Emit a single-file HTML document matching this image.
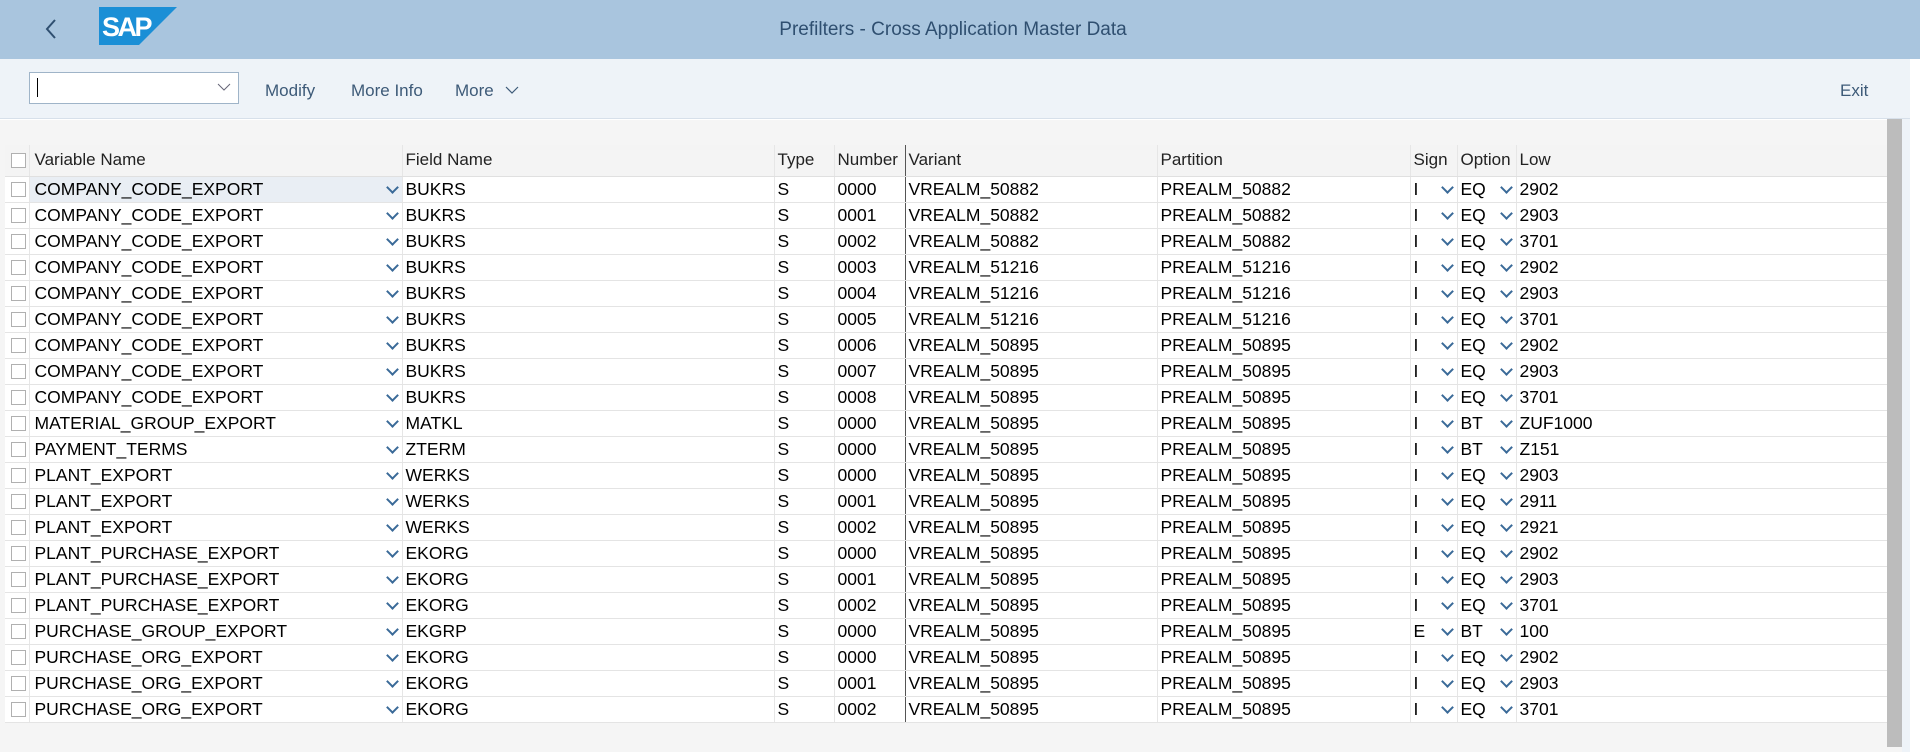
<!DOCTYPE html>
<html><head><meta charset="utf-8"><style>
*{margin:0;padding:0;box-sizing:border-box}
body{width:1920px;height:752px;overflow:hidden;background:#fff;font-family:"Liberation Sans",Arial,sans-serif;position:relative}
#hdr{position:absolute;left:0;top:0;width:1920px;height:59px;background:#a9c5de}
#title{position:absolute;left:0;width:1906px;top:19px;text-align:center;font-size:19px;color:#2f4f70}
#tb{position:absolute;left:0;top:59px;width:1910px;height:60px;background:#eef3f8;border-bottom:1px solid #d7e0ea}
.tbtn{position:absolute;top:22px;font-size:17px;color:#3d5a78}
#main{position:absolute;left:0;top:120px;width:1910px;height:632px;background:#f5f5f5}
#right{position:absolute;left:1902px;top:119px;width:8px;height:633px;background:#eef3f8}
#sb{position:absolute;left:1887px;top:119px;width:15px;height:628px;background:#bcbcbc}
table{position:absolute;left:5px;top:145px;border-collapse:collapse;table-layout:fixed;width:1882px;font-size:17.5px;color:#000}
td{height:26px;border-bottom:1px solid #e4e4e4;border-left:1px solid #e6e6e6;white-space:nowrap;overflow:hidden;padding:0 0 0 3px;background:#fff;position:relative;line-height:25px}
tr.h td{height:31px;background:#f4f4f4;border-bottom:1px solid #e0e0e0;line-height:30px;font-size:17px;color:#222}
td.cb{padding:0 0 0 3px;border-left:none}
td.v{padding-left:5px}
.box{display:block;width:15px;height:15px;border:1px solid #b0b0b0;background:#fff;margin:0 auto}
.dd::after{content:"";position:absolute;right:5px;top:6px;width:7px;height:7px;border-right:2px solid #3a6a98;border-bottom:2px solid #3a6a98;transform:rotate(45deg)}
td.vs{border-left:1px solid #555}
tr.sel td.v{background:#e9eef4}
</style></head><body>
<div id="hdr">
<svg style="position:absolute;left:44px;top:17px" width="14" height="24" viewBox="0 0 14 24"><path d="M11 3 L3 12 L11 21" fill="none" stroke="#2f4f70" stroke-width="2"/></svg>
<svg style="position:absolute;left:99px;top:7px" width="78" height="38" viewBox="0 0 78 38"><polygon points="0,0 78,0 40,38 0,38" fill="#1b8fd6"/><text x="3" y="29" font-family="Liberation Sans,Arial" font-weight="bold" font-size="27" fill="#fff" letter-spacing="-2.5">SAP</text></svg>
<div id="title">Prefilters - Cross Application Master Data</div>
</div>
<div id="tb">
<div style="position:absolute;left:29px;top:13px;width:210px;height:32px;background:#fff;border:1px solid #9fb4c8"></div>
<div style="position:absolute;left:37px;top:19px;width:1px;height:19px;background:#000"></div>
<svg style="position:absolute;left:217px;top:24px" width="14" height="9"><path d="M1 1 L7 7 L13 1" fill="none" stroke="#667" stroke-width="1"/></svg>
<div class="tbtn" style="left:265px">Modify</div>
<div class="tbtn" style="left:351px">More Info</div>
<div class="tbtn" style="left:455px">More</div>
<svg style="position:absolute;left:505px;top:27px" width="14" height="9"><path d="M1 1 L7 7 L13 1" fill="none" stroke="#3d5a78" stroke-width="1.2"/></svg>
<div class="tbtn" style="left:1840px">Exit</div>
</div>
<div id="main"></div>
<div id="right"></div>
<div id="sb"></div>
<table>
<colgroup><col style="width:24px"><col style="width:373px"><col style="width:372px"><col style="width:60px"><col style="width:71px"><col style="width:252px"><col style="width:253px"><col style="width:47px"><col style="width:59px"><col style="width:371px"></colgroup>
<tr class="h"><td class="cb"><span class="box"></span></td><td class="v" style="background:#f4f4f4">Variable Name</td><td>Field Name</td><td>Type</td><td>Number</td><td class="vs">Variant</td><td>Partition</td><td>Sign</td><td>Option</td><td>Low</td></tr>
<tbody id="rows"></tbody>
</table>
<script>
var d=[["COMPANY_CODE_EXPORT","BUKRS","0000","VREALM_50882","PREALM_50882","I","EQ","2902"],
["COMPANY_CODE_EXPORT","BUKRS","0001","VREALM_50882","PREALM_50882","I","EQ","2903"],
["COMPANY_CODE_EXPORT","BUKRS","0002","VREALM_50882","PREALM_50882","I","EQ","3701"],
["COMPANY_CODE_EXPORT","BUKRS","0003","VREALM_51216","PREALM_51216","I","EQ","2902"],
["COMPANY_CODE_EXPORT","BUKRS","0004","VREALM_51216","PREALM_51216","I","EQ","2903"],
["COMPANY_CODE_EXPORT","BUKRS","0005","VREALM_51216","PREALM_51216","I","EQ","3701"],
["COMPANY_CODE_EXPORT","BUKRS","0006","VREALM_50895","PREALM_50895","I","EQ","2902"],
["COMPANY_CODE_EXPORT","BUKRS","0007","VREALM_50895","PREALM_50895","I","EQ","2903"],
["COMPANY_CODE_EXPORT","BUKRS","0008","VREALM_50895","PREALM_50895","I","EQ","3701"],
["MATERIAL_GROUP_EXPORT","MATKL","0000","VREALM_50895","PREALM_50895","I","BT","ZUF1000"],
["PAYMENT_TERMS","ZTERM","0000","VREALM_50895","PREALM_50895","I","BT","Z151"],
["PLANT_EXPORT","WERKS","0000","VREALM_50895","PREALM_50895","I","EQ","2903"],
["PLANT_EXPORT","WERKS","0001","VREALM_50895","PREALM_50895","I","EQ","2911"],
["PLANT_EXPORT","WERKS","0002","VREALM_50895","PREALM_50895","I","EQ","2921"],
["PLANT_PURCHASE_EXPORT","EKORG","0000","VREALM_50895","PREALM_50895","I","EQ","2902"],
["PLANT_PURCHASE_EXPORT","EKORG","0001","VREALM_50895","PREALM_50895","I","EQ","2903"],
["PLANT_PURCHASE_EXPORT","EKORG","0002","VREALM_50895","PREALM_50895","I","EQ","3701"],
["PURCHASE_GROUP_EXPORT","EKGRP","0000","VREALM_50895","PREALM_50895","E","BT","100"],
["PURCHASE_ORG_EXPORT","EKORG","0000","VREALM_50895","PREALM_50895","I","EQ","2902"],
["PURCHASE_ORG_EXPORT","EKORG","0001","VREALM_50895","PREALM_50895","I","EQ","2903"],
["PURCHASE_ORG_EXPORT","EKORG","0002","VREALM_50895","PREALM_50895","I","EQ","3701"]];
var h="";d.forEach(function(r,i){h+='<tr'+(i==0?' class="sel"':'')+'><td class="cb"><span class="box"></span></td><td class="v dd">'+r[0]+'</td><td>'+r[1]+'</td><td>S</td><td>'+r[2]+'</td><td class="vs">'+r[3]+'</td><td>'+r[4]+'</td><td class="dd">'+r[5]+'</td><td class="dd">'+r[6]+'</td><td>'+r[7]+'</td></tr>';});
document.getElementById("rows").innerHTML=h;
</script>
</body></html>
